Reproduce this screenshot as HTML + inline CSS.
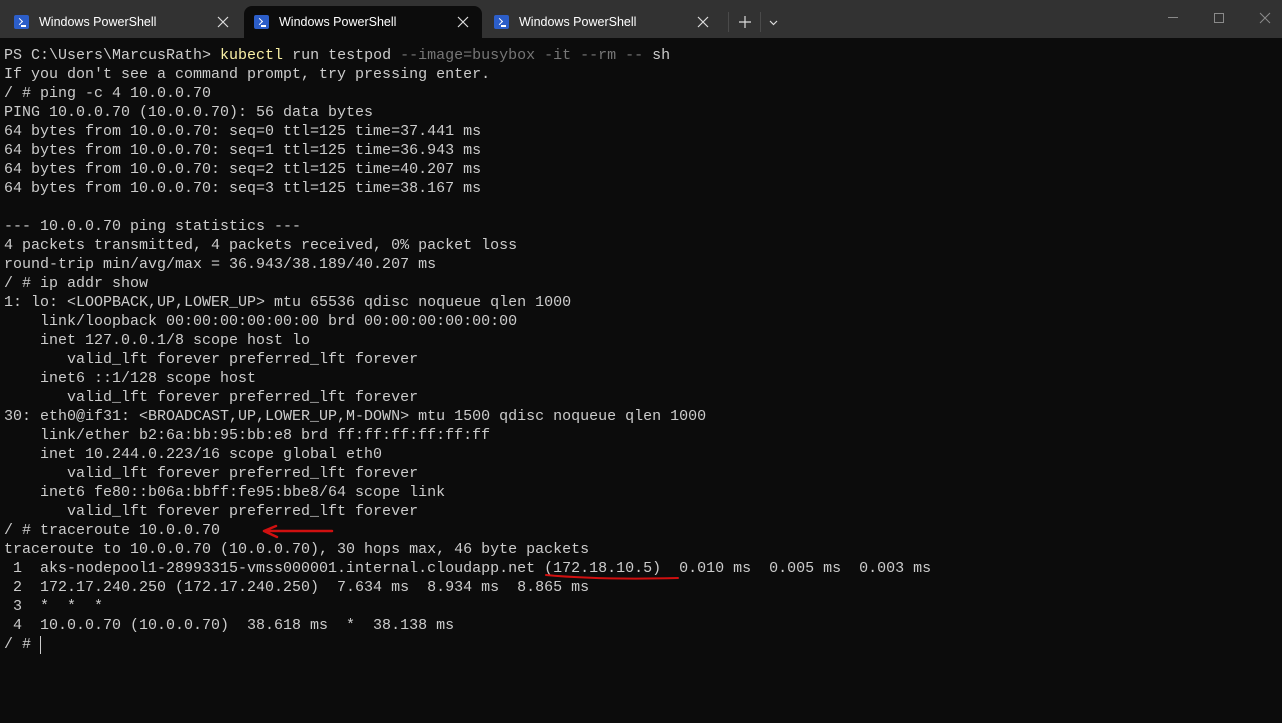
<!DOCTYPE html>
<html><head><meta charset="utf-8"><style>
body{margin:0;width:1282px;height:723px;background:#0c0c0c;overflow:hidden;position:relative;font-family:"Liberation Sans",sans-serif}
.bar{position:absolute;left:0;top:0;width:1282px;height:38px;background:#323232}
.tab{position:absolute;top:6px;height:32px;width:238px;color:#fff;font-size:12.5px}
.tab.active{background:#0c0c0c;border-radius:8px 8px 0 0}
.tab .t{position:absolute;left:35px;top:9px}
.ico{position:absolute;left:10px;top:9px;width:15px;height:14px;background:#2c5ec9;border-radius:2px}
.ico:after{content:"";position:absolute;left:3px;top:4px;width:4px;height:4px;border-right:1.5px solid #fff;border-bottom:1.5px solid #fff;transform:rotate(-45deg)}
.ico:before{content:"";position:absolute;left:7px;top:10px;width:5px;height:1.5px;background:#fff}
pre{position:absolute;left:4px;top:46px;margin:0;font-family:"Liberation Mono",monospace;font-size:15px;line-height:19px;color:#cccccc}
.y{color:#f9f1a5}.g{color:#767676}
</style></head><body>
<div class="bar">
<div class="tab" style="left:4px"><div class="ico"></div><span class="t">Windows PowerShell</span></div>
<div class="tab active" style="left:244px"><div class="ico"></div><span class="t">Windows PowerShell</span></div>
<div class="tab" style="left:484px"><div class="ico"></div><span class="t">Windows PowerShell</span></div>
<div style="position:absolute;left:728px;top:12px;width:1px;height:20px;background:#4a4a4a"></div>
<div style="position:absolute;left:760px;top:12px;width:1px;height:20px;background:#4a4a4a"></div>
</div>
<pre>PS C:\Users\MarcusRath&gt; <span class="y">kubectl</span> run testpod <span class="g">--image=busybox -it --rm --</span> sh
If you don't see a command prompt, try pressing enter.
/ # ping -c 4 10.0.0.70
PING 10.0.0.70 (10.0.0.70): 56 data bytes
64 bytes from 10.0.0.70: seq=0 ttl=125 time=37.441 ms
64 bytes from 10.0.0.70: seq=1 ttl=125 time=36.943 ms
64 bytes from 10.0.0.70: seq=2 ttl=125 time=40.207 ms
64 bytes from 10.0.0.70: seq=3 ttl=125 time=38.167 ms

--- 10.0.0.70 ping statistics ---
4 packets transmitted, 4 packets received, 0% packet loss
round-trip min/avg/max = 36.943/38.189/40.207 ms
/ # ip addr show
1: lo: &lt;LOOPBACK,UP,LOWER_UP&gt; mtu 65536 qdisc noqueue qlen 1000
    link/loopback 00:00:00:00:00:00 brd 00:00:00:00:00:00
    inet 127.0.0.1/8 scope host lo
       valid_lft forever preferred_lft forever
    inet6 ::1/128 scope host
       valid_lft forever preferred_lft forever
30: eth0@if31: &lt;BROADCAST,UP,LOWER_UP,M-DOWN&gt; mtu 1500 qdisc noqueue qlen 1000
    link/ether b2:6a:bb:95:bb:e8 brd ff:ff:ff:ff:ff:ff
    inet 10.244.0.223/16 scope global eth0
       valid_lft forever preferred_lft forever
    inet6 fe80::b06a:bbff:fe95:bbe8/64 scope link
       valid_lft forever preferred_lft forever
/ # traceroute 10.0.0.70
traceroute to 10.0.0.70 (10.0.0.70), 30 hops max, 46 byte packets
 1  aks-nodepool1-28993315-vmss000001.internal.cloudapp.net (172.18.10.5)  0.010 ms  0.005 ms  0.003 ms
 2  172.17.240.250 (172.17.240.250)  7.634 ms  8.934 ms  8.865 ms
 3  *  *  *
 4  10.0.0.70 (10.0.0.70)  38.618 ms  *  38.138 ms
/ # </pre>
<div style="position:absolute;left:40px;top:636px;width:1px;height:18px;background:#ccc"></div>
<svg style="position:absolute;left:0;top:0" width="1282" height="723">
<g stroke="#dddddd" stroke-width="1.2" fill="none">
<path d="M218 17L228 27M228 17L218 27"/>
<path d="M458 17L468 27M468 17L458 27"/>
<path d="M698 17L708 27M708 17L698 27"/>
<path d="M745 16V28M739 22H751"/>
<path d="M770 21L773.5 24.5L777 21"/>
</g>
<g stroke="#8a8a8a" stroke-width="1" fill="none">
<path d="M1168 17.5H1178"/>
<rect x="1214.5" y="13.5" width="9" height="9"/>
<path d="M1260 13L1270 23M1270 13L1260 23"/>
</g>
<path d="M332 531 L264 531 M264 531 L276 526 M264 531 L277 537" stroke="#d01010" stroke-width="2.5" fill="none" stroke-linecap="round"/>
<path d="M546 575 Q600 580 678 578" stroke="#d01010" stroke-width="2" fill="none" stroke-linecap="round"/>
</svg>
</body></html>
